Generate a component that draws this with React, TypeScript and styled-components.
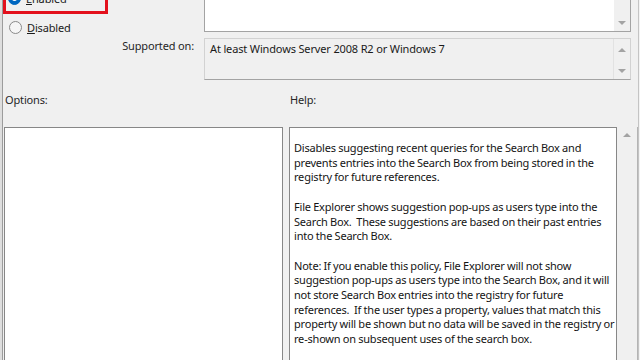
import styled, { createGlobalStyle } from "styled-components";

const GlobalStyle = createGlobalStyle`
  html, body {
    margin: 0;
    padding: 0;
    background: #dedede;
    overflow: hidden;
  }
  body {
    font-family: "Segoe UI", "Noto Sans", "Liberation Sans", sans-serif;
    font-size: 11px;
    letter-spacing: -0.15px;
    color: #1a1a1a;
  }
`;

const helpParagraphs = [
  [
    "Disables suggesting recent queries for the Search Box and",
    "prevents entries into the Search Box from being stored in the",
    "registry for future references.",
  ],
  [
    "File Explorer shows suggestion pop-ups as users type into the",
    "Search Box.  These suggestions are based on their past entries",
    "into the Search Box.",
  ],
  [
    "Note: If you enable this policy, File Explorer will not show",
    "suggestion pop-ups as users type into the Search Box, and it will",
    "not store Search Box entries into the registry for future",
    "references.  If the user types a property, values that match this",
    "property will be shown but no data will be saved in the registry or",
    "re-shown on subsequent uses of the search box.",
  ],
];

export default function App() {
  return (
    <>
      <GlobalStyle />
      <Window>
        <Dialog>
          <TopGrid>
            <RadioColumn>
              <Highlight>
                <RadioRow>
                  <Radio $checked />
                  <RadioLabel>
                    <u>E</u>nabled
                  </RadioLabel>
                </RadioRow>
              </Highlight>
              <RadioRow $indent>
                <Radio />
                <RadioLabel>
                  <u>D</u>isabled
                </RadioLabel>
              </RadioRow>
            </RadioColumn>

            <CommentBox>
              <CommentText />
              <ScrollTrack $align="end">
                <Arrow $dir="down" />
              </ScrollTrack>
            </CommentBox>

            <FieldLabel>Supported on:</FieldLabel>
            <SupportedBox>
              <SupportedText>
                At least Windows Server 2008 R2 or Windows 7
              </SupportedText>
              <ScrollTrack $align="between" $divider>
                <Arrow $dir="up" />
                <Arrow $dir="down" />
              </ScrollTrack>
            </SupportedBox>
          </TopGrid>

          <PaneGrid>
            <PaneLabel>Options:</PaneLabel>
            <PaneLabel>Help:</PaneLabel>
          </PaneGrid>

          <PaneGrid $fill>
            <OptionsPane />
            <HelpPane>
              <HelpText>
                {helpParagraphs.map((lines, i) => (
                  <HelpParagraph key={i}>
                    {lines.map((line) => (
                      <HelpLine key={line}>{line}</HelpLine>
                    ))}
                  </HelpParagraph>
                ))}
              </HelpText>
              <ScrollTrack $align="start" $wide>
                <Arrow $dir="up" />
              </ScrollTrack>
            </HelpPane>
          </PaneGrid>
        </Dialog>
        <WindowEdge />
      </Window>
    </>
  );
}

const Window = styled.div`
  display: flex;
  height: 360px;
  padding-left: 2px;
  overflow: hidden;
`;

const Dialog = styled.div`
  flex: 1;
  display: flex;
  flex-direction: column;
  background: #f0f0f0;
  border-left: 1px solid #9c9c9c;
`;

const WindowEdge = styled.div`
  width: 2px;
  background: #f3f3f3;
  border-left: 1px solid #c4c4c4;
`;

const TopGrid = styled.div`
  display: grid;
  grid-template-columns: 201px 427px;
  row-gap: 2px;
  margin-top: -14px;
`;

const RadioColumn = styled.div`
  display: flex;
  flex-direction: column;
  gap: 4px;
`;

const Highlight = styled.div`
  width: 99px;
  height: 22px;
  border: 3px solid #e3101c;
  display: flex;
  align-items: center;
`;

const RadioRow = styled.div<{ $indent?: boolean }>`
  display: flex;
  align-items: center;
  gap: 5px;
  height: 18px;
  padding-left: ${({ $indent }) => ($indent ? "6px" : "2px")};
  margin-top: ${({ $indent }) => ($indent ? "0" : "-4px")};
`;

const Radio = styled.span<{ $checked?: boolean }>`
  width: 13px;
  height: 13px;
  border-radius: 50%;
  box-sizing: border-box;
  display: flex;
  align-items: center;
  justify-content: center;
  background: ${({ $checked }) => ($checked ? "#0067c0" : "#f6f6f6")};
  border: 1px solid ${({ $checked }) => ($checked ? "#0067c0" : "#8a8a8a")};

  &::after {
    content: "";
    display: ${({ $checked }) => ($checked ? "block" : "none")};
    width: 5px;
    height: 5px;
    border-radius: 50%;
    background: #ffffff;
  }
`;

const RadioLabel = styled.span`
  line-height: 15px;
  color: #1a1a1a;
`;

const CommentBox = styled.div`
  display: flex;
  height: 46px;
  box-sizing: border-box;
  border: 1px solid #a3a3a3;
  border-top: none;
`;

const CommentText = styled.div`
  flex: 1;
  background: #ffffff;
`;

const ScrollTrack = styled.div<{
  $align: "start" | "end" | "between";
  $divider?: boolean;
  $wide?: boolean;
}>`
  width: ${({ $wide }) => ($wide ? "20px" : "16px")};
  display: flex;
  flex-direction: column;
  align-items: center;
  justify-content: ${({ $align }) =>
    $align === "start"
      ? "flex-start"
      : $align === "end"
        ? "flex-end"
        : "space-between"};
  padding: ${({ $align }) =>
    $align === "start" ? "6px 0 0" : $align === "end" ? "0 0 6px" : "9px 0 6px"};
  background: #f0f0f0;
  border-left: ${({ $divider }) => ($divider ? "1px solid #e2e2e2" : "none")};
  border-right: ${({ $wide }) => ($wide ? "1px solid #b4b4b4" : "none")};
`;

const Arrow = styled.span<{ $dir: "up" | "down" }>`
  width: 0;
  height: 0;
  border-left: 4px solid transparent;
  border-right: 4px solid transparent;
  ${({ $dir }) =>
    $dir === "up"
      ? "border-bottom: 4px solid #a3a3a3;"
      : "border-top: 4px solid #a3a3a3;"}
`;

const FieldLabel = styled.div`
  text-align: right;
  padding-right: 10px;
  line-height: 15px;
  color: #262626;
`;

const SupportedBox = styled.div`
  display: flex;
  height: 42px;
  box-sizing: border-box;
  border: 1px solid #d2d2d2;
  border-bottom-color: #a3a3a3;
`;

const SupportedText = styled.div`
  flex: 1;
  padding: 2px 5px 0;
  line-height: 15px;
  color: #1a1a1a;
  white-space: nowrap;
`;

const PaneGrid = styled.div<{ $fill?: boolean }>`
  display: grid;
  grid-template-columns: 279px 349px;
  column-gap: 6px;
  margin-left: 1px;
  margin-top: ${({ $fill }) => ($fill ? "20px" : "12px")};
  ${({ $fill }) => ($fill ? "flex: 1; min-height: 0;" : "")}
`;

const PaneLabel = styled.div`
  padding-left: 1px;
  line-height: 15px;
  color: #262626;
`;

const OptionsPane = styled.div`
  background: #ffffff;
  border: 1px solid #878787;
  border-bottom: none;
`;

const HelpPane = styled.div`
  display: flex;
  min-height: 0;
`;

const HelpText = styled.div`
  flex: 1;
  background: #ffffff;
  border: 1px solid #878787;
  border-bottom: none;
  padding: 13px 4px 0;
  overflow: hidden;
`;

const HelpParagraph = styled.p`
  margin: 0 0 14.7px;
`;

const HelpLine = styled.span`
  display: block;
  line-height: 14.7px;
  white-space: pre;
  letter-spacing: -0.2px;
  word-spacing: -0.3px;
  color: #141414;
`;
